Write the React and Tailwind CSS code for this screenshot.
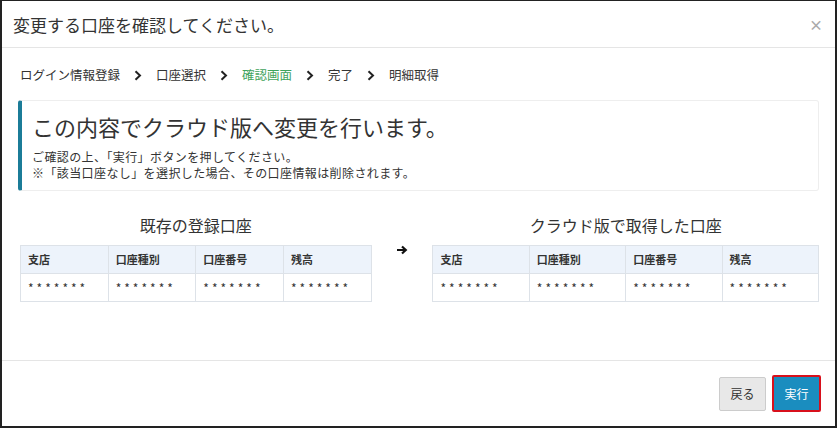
import React from "react";

const cols = ["支店", "口座種別", "口座番号", "残高"];

function Table({ title }) {
  return (
    <div className="flex flex-col">
      <div className="text-center text-[16px] text-[#333] leading-[20px] mb-[10px]">{title}</div>
      <table className="w-full border-collapse table-fixed">
        <thead>
          <tr>
            {cols.map((c) => (
              <th key={c} className="h-[28px] border border-[#dde2e8] bg-[#edf3fb] text-left pl-[7px] text-[11px] font-bold text-[#333]">
                {c}
              </th>
            ))}
          </tr>
        </thead>
        <tbody>
          <tr>
            {cols.map((c) => (
              <td key={c} className="h-[28px] border border-[#dde2e8] bg-white pl-[7px] text-[12px] text-[#333] tracking-[3px]">
                *******
              </td>
            ))}
          </tr>
        </tbody>
      </table>
    </div>
  );
}

function Sep() {
  return (
    <svg width="8" height="11" viewBox="0 0 8 11" className="mx-[14px]">
      <path d="M1.5 1.2L6 5.5 1.5 9.8" stroke="#222" strokeWidth="2" fill="none" />
    </svg>
  );
}

export default function App() {
  return (
    <div
      className="w-[837px] h-[428px] bg-white border-l-2 border-r-2 border-b-2 border-t border-[#222] flex flex-col text-[#333]"
      style={{ fontFamily: '"Noto Sans CJK JP", "Noto Sans", sans-serif' }}
    >
      <div className="h-[47px] flex items-center justify-between pl-[11px] pr-[12px] border-b border-[#e5e5e5]">
        <div className="text-[17px] leading-[20px] pt-[1px]">変更する口座を確認してください。</div>
        <div className="text-[14px] text-[#aaa] font-bold leading-none">×</div>
      </div>
      <div className="flex-1 flex flex-col px-[16px]">
        <div className="flex items-center h-[52px] pl-[2px] text-[12.5px] pt-[2px]">
          <span>ログイン情報登録</span>
          <Sep />
          <span>口座選択</span>
          <Sep />
          <span className="text-[#3fa35c]">確認画面</span>
          <Sep />
          <span>完了</span>
          <Sep />
          <span>明細取得</span>
        </div>
        <div className="h-[91px] border border-[#eee] border-l-[4px] border-l-[#1b7c98] rounded-[3px] pl-[10px] pt-[10px]">
          <div className="text-[22px] leading-[30px]">この内容でクラウド版へ変更を行います。</div>
          <div className="text-[12px] tracking-[0.4px] leading-[16px] mt-[8px]">ご確認の上、「実行」ボタンを押してください。</div>
          <div className="text-[12px] tracking-[0.4px] leading-[16px]">※「該当口座なし」を選択した場合、その口座情報は削除されます。</div>
        </div>
        <div className="flex items-start mt-[24px] pl-[2px]">
          <div className="w-[352px]">
            <Table title="既存の登録口座" />
          </div>
          <div className="w-[61px] flex justify-center pt-[30px]">
            <svg width="12" height="10" viewBox="0 0 12 10">
              <path d="M1 5h8M6 1.5L9.8 5 6 8.5" stroke="#111" strokeWidth="2.2" fill="none" />
            </svg>
          </div>
          <div className="w-[387px]">
            <Table title="クラウド版で取得した口座" />
          </div>
        </div>
      </div>
      <div className="h-[66px] border-t border-[#e5e5e5] flex items-center justify-end pr-[14px] gap-[6px]">
        <button className="h-[34px] w-[47px] bg-[#e8e8e8] border border-[#ccc] text-[12px] text-[#333] rounded-[2px]">戻る</button>
        <button className="h-[37px] w-[49px] bg-[#1a8dbf] border-2 border-[#d8101c] text-[12px] text-white rounded-[2px]">実行</button>
      </div>
    </div>
  );
}
